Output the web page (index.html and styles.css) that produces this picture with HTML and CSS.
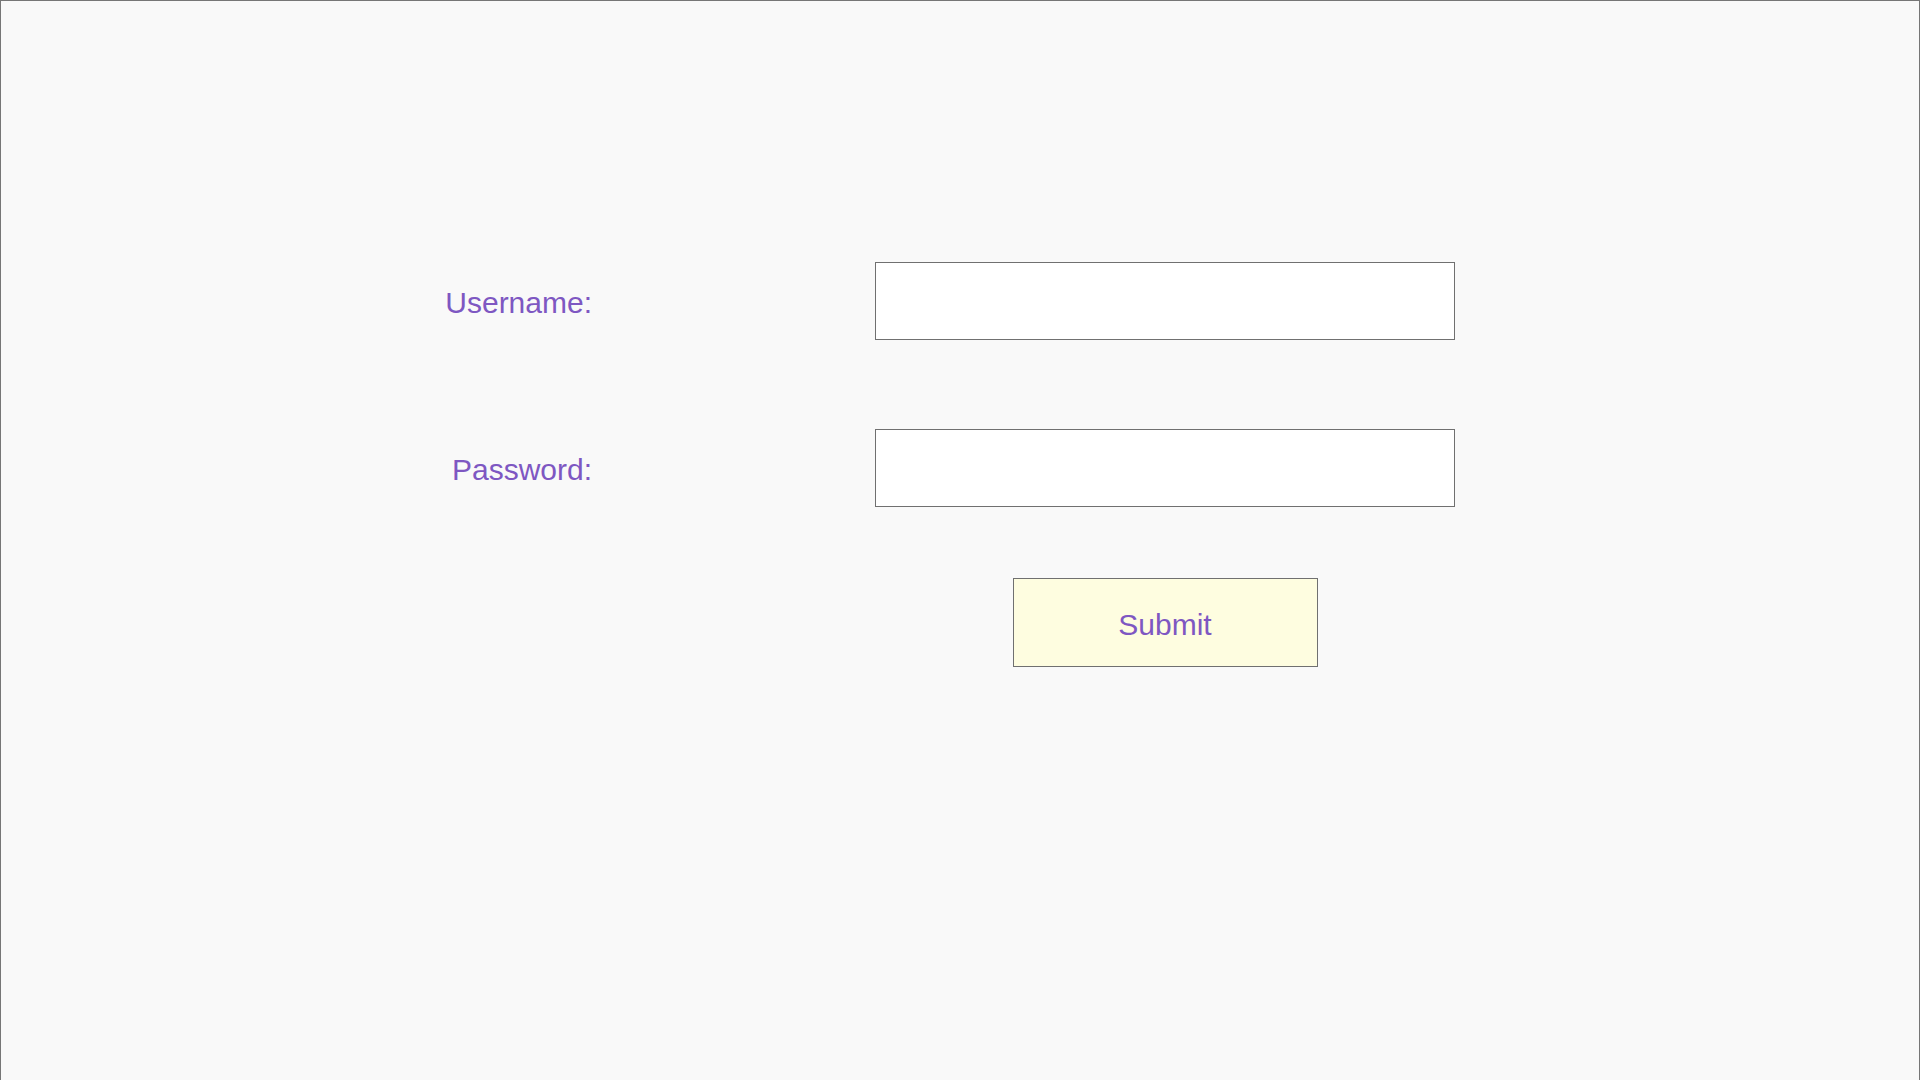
FILE: index.html
```html
<!DOCTYPE html>
<html lang="en">
<head>
<meta charset="utf-8">
<title>Login</title>
<link rel="stylesheet" href="styles.css">
</head>
<body>
<form class="form" onsubmit="return false">
  <div class="row">
    <label class="label" for="username">Username:</label>
    <input class="field" id="username" type="text">
  </div>
  <div class="row">
    <label class="label" for="password">Password:</label>
    <input class="field" id="password" type="password">
  </div>
  <div class="actions">
    <button class="submit" type="submit">Submit</button>
  </div>
</form>
</body>
</html>
```
FILE: styles.css
```css
html, body {
  margin: 0;
  padding: 0;
}
body {
  box-sizing: border-box;
  height: 1080px;
  background: #f9f9f9;
  border: 1px solid #767676;
  border-bottom: none;
  font-family: "Liberation Sans", Arial, Helvetica, sans-serif;
  overflow: hidden;
}
.form {
  display: flex;
  flex-direction: column;
  gap: 89px;
  padding-top: 261px;
  margin: 0;
}
.row {
  display: grid;
  grid-template-columns: 591px 580px;
  column-gap: 283px;
  align-items: center;
  height: 78px;
}
.label {
  justify-self: end;
  color: #7e57c2;
  font-size: 30px;
  line-height: 1;
  padding-top: 4px;
}
.field {
  box-sizing: border-box;
  width: 580px;
  height: 78px;
  margin: 0;
  border: 1px solid #707070;
  background: #ffffff;
  border-radius: 0;
  outline: none;
  font-size: 26px;
  padding: 0 12px;
}
.actions {
  display: flex;
  justify-content: center;
  width: 580px;
  margin-left: 874px;
  margin-top: -18px;
}
.submit {
  box-sizing: border-box;
  width: 305px;
  height: 89px;
  margin: 0;
  border: 1px solid #707070;
  border-radius: 0;
  background: #fefde0;
  color: #7e57c2;
  font-family: "Liberation Sans", Arial, Helvetica, sans-serif;
  font-size: 30px;
  padding: 4px 0 0 0;
  cursor: pointer;
}
```
